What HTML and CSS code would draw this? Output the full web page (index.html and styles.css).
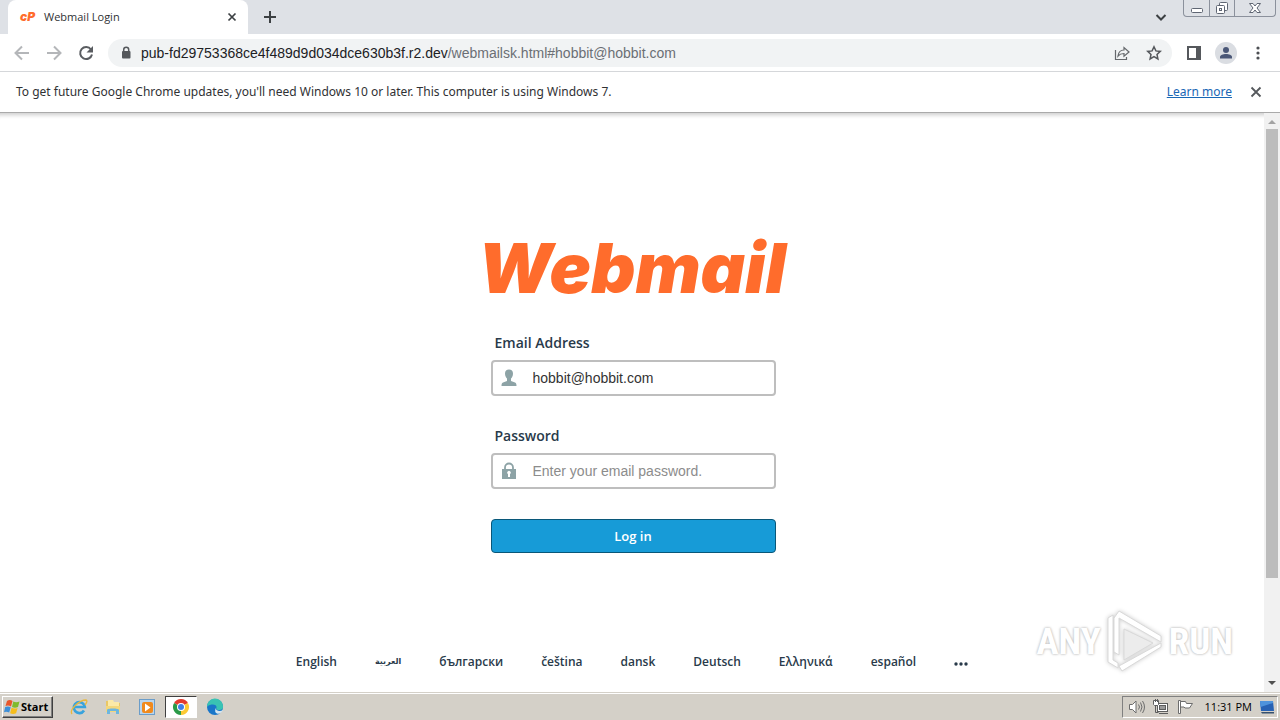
FILE: index.html
```html
<!DOCTYPE html>
<html lang="en">
<head>
    <meta charset="UTF-8">
    <meta name="viewport" content="width=device-width, initial-scale=1.0">
    <title>Webmail Login</title>
    <link rel="stylesheet" href="styles.css">
</head>

<body>
    <header class="tabstrip">
        <div class="tab">
            <svg class="favicon" width="20" height="16" viewBox="0 0 20 16"><text x="0" y="12">cP</text></svg>
            <span class="tab-title">Webmail Login</span>
            <button type="button" class="icon-btn" aria-label="Close tab">
                <svg width="16" height="16" viewBox="0 0 16 16"><path d="M4.500 4.500l7 7M11.500 4.500l-7 7" stroke="#3c4043" stroke-width="1.700"/></svg>
            </button>
        </div>
        <button type="button" class="icon-btn new-tab" aria-label="New tab">
            <svg width="16" height="16" viewBox="0 0 16 16"><path d="M8 2v12M2 8h12" stroke="#3c4043" stroke-width="2"/></svg>
        </button>
        <button type="button" class="icon-btn tab-search" aria-label="Search tabs">
            <svg width="14" height="16" viewBox="0 0 14 16" fill="none"><path d="M2.500 6l4.500 4.500L11.500 6" stroke="#3c4043" stroke-width="2"/></svg>
        </button>
        <div class="window-buttons">
            <button type="button" aria-label="Minimize">
                <svg width="14" height="14" viewBox="0 0 14 14"><rect x="1.500" y="7.500" width="11" height="4" rx="1" fill="#fff" stroke="#5f6673"/></svg>
            </button>
            <button type="button" aria-label="Restore">
                <svg width="14" height="14" viewBox="0 0 14 14" fill="#fff" stroke="#5f6673"><rect x="4.500" y="1.500" width="8" height="8" rx="1"/><rect x="1.500" y="4.500" width="8" height="8" rx="1"/><rect x="4.500" y="7.500" width="2" height="2"/></svg>
            </button>
            <button type="button" class="wide" aria-label="Close window">
                <svg width="14" height="14" viewBox="0 0 14 14"><path d="M1.500 2.500h3.500l2 2.500 2-2.500h3.500L9 7l3.500 4.500H9L7 9l-2 2.500H1.500L5 7z" fill="#fff" stroke="#5f6673"/></svg>
            </button>
        </div>
    </header>

    <nav class="toolbar">
        <button type="button" class="icon-btn" aria-label="Back">
            <svg width="16" height="16" viewBox="0 0 16 16" fill="none" stroke="#b4b6b9" stroke-width="2"><path d="M15 8H2M8 1.500L1.500 8 8 14.500"/></svg>
        </button>
        <button type="button" class="icon-btn" aria-label="Forward">
            <svg width="16" height="16" viewBox="0 0 16 16" fill="none" stroke="#b4b6b9" stroke-width="2"><path d="M1 8h13M8 1.500L14.500 8 8 14.500"/></svg>
        </button>
        <button type="button" class="icon-btn" aria-label="Reload">
            <svg width="16" height="16" viewBox="0 0 16 16"><path d="M13 4.500A6 6 0 1 0 14 9.500" fill="none" stroke="#5a5d61" stroke-width="2"/><path d="M15 1v6.500H8.500z" fill="#5a5d61"/></svg>
        </button>
        <div class="omnibox">
            <svg width="12" height="14" viewBox="0 0 12 14"><rect x="2" y="5" width="8.500" height="7.500" rx="1" fill="#55585c"/><path d="M3.700 6V3.700a2.500 2.500 0 0 1 5 0V6" fill="none" stroke="#55585c" stroke-width="1.500"/></svg>
            <p class="url">pub-fd29753368ce4f489d9d034dce630b3f.r2.dev<span>/webmailsk.html#hobbit@hobbit.com</span></p>
            <button type="button" class="icon-btn" aria-label="Share">
                <svg width="16" height="16" viewBox="0 0 16 16" fill="none" stroke="#65686c" stroke-width="1.200"><path d="M1.500 5v9.500h11V12"/><path d="M4 11c.5-4 2.500-6 6-6V2.500L15 7l-5 4.200V8.500C7.500 8.500 5.500 9.200 4 11z"/></svg>
            </button>
            <button type="button" class="icon-btn" aria-label="Bookmark this tab">
                <svg width="16" height="16" viewBox="0 0 16 16"><path d="M8 1.800l1.900 4.100 4.400.5L11 9.400l.9 4.500L8 11.600l-3.900 2.300.9-4.500-3.300-3 4.400-.5z" fill="none" stroke="#55585c" stroke-width="1.500"/></svg>
            </button>
        </div>
        <button type="button" class="icon-btn" aria-label="Side panel">
            <svg width="16" height="16" viewBox="0 0 16 16"><rect x="2" y="2" width="12" height="12" fill="none" stroke="#55585c" stroke-width="2"/><path d="M10 2h5v12h-5z" fill="#55585c"/></svg>
        </button>
        <button type="button" class="icon-btn avatar" aria-label="Profile">
            <svg width="16" height="16" viewBox="0 0 16 16" fill="#4a5777"><circle cx="8" cy="5" r="3"/><path d="M2 13.500V12c0-2 3-3 6-3s6 1 6 3v1.500z"/></svg>
        </button>
        <button type="button" class="icon-btn" aria-label="Menu">
            <svg width="16" height="16" viewBox="0 0 16 16" fill="#4c4f53"><circle cx="8" cy="3" r="1.600"/><circle cx="8" cy="8" r="1.600"/><circle cx="8" cy="13" r="1.600"/></svg>
        </button>
    </nav>

    <aside class="infobar">
        <p>To get future Google Chrome updates, you'll need Windows 10 or later. This computer is using Windows 7.</p>
        <a href="#">Learn more</a>
        <button type="button" class="icon-btn" aria-label="Dismiss">
            <svg width="16" height="16" viewBox="0 0 16 16"><path d="M3.500 3.500l9 9M12.500 3.500l-9 9" stroke="#55585c" stroke-width="1.800"/></svg>
        </button>
    </aside>

    <div class="viewport">
        <main class="page">
            <h1 class="logo">Webmail</h1>
            <form class="login">
                <label for="email">Email Address</label>
                <div class="field">
                    <svg width="16" height="18" viewBox="0 0 16 18" fill="#8da3a6"><path d="M4 4.500C4 2 5.500.500 8 .500s4 1.500 4 4c0 2.500-1 4-2 5v2.500l4 1.500c1.200.500 1.500 1.500 1.500 3.500H.500c0-2 .300-3 1.500-3.500L6 12V9.500c-1-1-2-2.500-2-5z"/></svg>
                    <input type="text" id="email" name="email" value="hobbit@hobbit.com">
                </div>

                <label for="password">Password</label>
                <div class="field">
                    <svg width="16" height="18" viewBox="0 0 16 18"><path d="M4 8V5.500a4 4 0 0 1 8 0V8" fill="none" stroke="#8da3a6" stroke-width="1.800"/><rect x="1" y="7" width="14" height="10" fill="#8da3a6"/><path d="M7 15h2v-3a1.700 1.700 0 1 0-2 0z" fill="#fff"/></svg>
                    <input type="password" id="password" name="password" placeholder="Enter your email password.">
                </div>

                <button type="button" class="submit">Log in</button>
            </form>

            <nav class="languages">
                <a href="#">English</a>
                <a href="#" lang="ar">العربية</a>
                <a href="#" lang="bg">български</a>
                <a href="#">čeština</a>
                <a href="#">dansk</a>
                <a href="#">Deutsch</a>
                <a href="#" lang="el">Ελληνικά</a>
                <a href="#">español</a>
                <a href="#" class="more" aria-label="More languages">
                    <svg width="14" height="4" viewBox="0 0 14 4" fill="#293a4a"><circle cx="2" cy="2" r="1.700"/><circle cx="7" cy="2" r="1.700"/><circle cx="12" cy="2" r="1.700"/></svg>
                </a>
            </nav>
        </main>
        <div class="scrollbar">
            <svg width="16" height="16" viewBox="0 0 16 16"><path d="M4 11l4-4 4 4z" fill="#a3a3a3"/></svg>
            <div class="track"><div class="thumb"></div></div>
            <svg width="16" height="16" viewBox="0 0 16 16"><path d="M4 5l4 4 4-4z" fill="#505050"/></svg>
        </div>

        <div class="watermark">
            <span>ANY</span>
            <svg width="56" height="64" viewBox="0 0 56 64" fill="#fff" stroke="#d9d9d9"><path d="M12 2L54 27v6L12 9v37l-5-3V9z"/><path d="M1 9l5-3v45l5 3v5L1 53z"/><path d="M17 20l29 14-29 17z" fill="#ececec"/><path d="M54 34v4L15 62l-3-5z"/></svg>
            <span>RUN</span>
        </div>
    </div>

    <footer class="taskbar">
        <button type="button" class="start">
            <svg width="17" height="16" viewBox="0 0 17 16"><path d="M3 2c2-1.500 4-1 5.500 0L7 7.500C5.500 6.500 3.500 6 1.500 7z" fill="#e8562a"/><path d="M9.300 2.500c2 1 4 1 6.200 0L14 8c-2 1-4 1-6 0z" fill="#7fba2d"/><path d="M1.200 8c2-1 4-.7 5.500.3L5.200 13.500c-2-1-4-1-5.200-.2z" fill="#3c8fd8"/><path d="M7.600 8.800c2 1 4 1 6 .2l-1.500 5.200c-2 1-4 1-6 0z" fill="#f6bd1b"/></svg>
            Start
        </button>
        <div class="quick">
            <button type="button" aria-label="Internet Explorer">
                <svg width="18" height="18" viewBox="0 0 18 18" fill="none"><path d="M14 12.500a5.500 5.500 0 1 1 .8-3.500H4.500" stroke="#38a3dd" stroke-width="2.700"/><path d="M2 16C-1 12 9 2 16 2c2 .5 0 4-1 5" stroke="#e9b83c" stroke-width="1.300"/></svg>
            </button>
            <button type="button" aria-label="Explorer">
                <svg width="18" height="18" viewBox="0 0 18 18"><path d="M2 3h6l1 2h7v9H2z" fill="#e9c765"/><path d="M4 2h5l1 2h5v5H4z" fill="#fbe9a7"/><path d="M2 8h14v6H2z" fill="#f3d77c"/><path d="M3 16v-4c0-2 12-2 12 0v4h-3v-3H6v3z" fill="#6db6df"/></svg>
            </button>
            <button type="button" aria-label="Media Player">
                <svg width="18" height="18" viewBox="0 0 18 18"><rect x="1.500" y="1.500" width="15" height="15" fill="#b9d5ed" stroke="#6b9dc9"/><rect x="4" y="4" width="11" height="11" rx="2" fill="#f08a1d"/><path d="M7 5.500l5.500 4L7 13.500z" fill="#fff"/></svg>
            </button>
            <button type="button" class="active" aria-label="Chrome">
                <svg width="18" height="18" viewBox="0 0 18 18"><path d="M9 9L2.070 5A8 8 0 0 1 15.930 5z" fill="#e33b2e"/><path d="M9 9l6.930-4A8 8 0 0 1 9 17z" fill="#fcc934"/><path d="M9 9v8A8 8 0 0 1 2.070 5z" fill="#2a9a48"/><circle cx="9" cy="9" r="4" fill="#fff"/><circle cx="9" cy="9" r="3" fill="#3f7fe8"/></svg>
            </button>
            <button type="button" aria-label="Edge">
                <svg width="18" height="18" viewBox="0 0 18 18"><circle cx="9" cy="9" r="8" fill="#1976c9"/><path d="M1 9a8 8 0 0 1 16-1c.5 3-2 4.500-5 4-2-.3-2-1.500-1.500-2.500C11 7 8 6 5.500 6.500 3 7 1.500 8 1 9z" fill="#39c3b3"/><path d="M17 12c-3 2-7 1-7.500-2-.3 3-1 4 1.500 5.500 2 1 5-1 6-3.500z" fill="#d6e6ef"/></svg>
            </button>
        </div>
        <div class="tray">
            <svg width="18" height="16" viewBox="0 0 18 16" fill="none" stroke="#6d6d6d"><path d="M1.500 5.500h3L8 2v12l-3.500-3.500h-3z" fill="#fff"/><path d="M10.500 5.500q2 2.500 0 5M12.500 3.500q3 4.500 0 9M14.500 2q4 6 0 12"/></svg>
            <svg width="18" height="16" viewBox="0 0 18 16" stroke="#5d5d5d"><rect x="5.500" y="4.500" width="10" height="8" fill="#fff"/><rect x="7.500" y="6.500" width="6" height="4" fill="#999"/><path d="M7 14.500h9" fill="none"/><path d="M1.500 1.500h5v4l-1 1h-3l-1-1z" fill="#fff"/><path d="M3.500 6.500v7h3M3.500 0v3M5.500 0v3" fill="none"/></svg>
            <svg width="18" height="16" viewBox="0 0 18 16" fill="#fff" stroke="#6d6d6d"><path d="M2.500 1.500h2v13h-2z"/><path d="M4.500 2.500h5l1 2h6l-3 4.500H9l-1-1H4.500z"/></svg>
            <time>11:31 PM</time>
            <svg width="16" height="16" viewBox="0 0 16 16"><path d="M1 2h13l1 10H2z" fill="#2762b4"/><path d="M1 2h13v2L1.500 8z" fill="#4e93dc"/><path d="M2 13h13v1.500H3z" fill="#35506f"/></svg>
        </div>
    </footer>
</body>
</html>
```
FILE: styles.css
```css
* {
    box-sizing: border-box;
    margin: 0;
    padding: 0;
}

body {
    display: flex;
    flex-direction: column;
    height: 100vh;
    overflow: hidden;
    background-color: #fff;
    color: #303134;
    font-family: "Noto Sans", sans-serif;
    font-size: 12px;
}

button {
    border: none;
    background: none;
    font-family: inherit;
}

svg {
    display: block;
    flex: none;
}

.icon-btn {
    display: flex;
    flex: none;
    align-items: center;
    justify-content: center;
}

/* browser chrome */
.tabstrip {
    display: flex;
    height: 34px;
    flex: none;
    padding-left: 8px;
    background-color: #dee1e6;
}

.tab {
    display: flex;
    align-items: center;
    width: 240px;
    padding: 0 8px 0 12px;
    border-radius: 8px 8px 0 0;
    background-color: #fff;
}

.favicon {
    overflow: visible;
}

.favicon text {
    fill: #ff6c2c;
    font-family: Inter, sans-serif;
    font-size: 12px;
    font-style: italic;
    font-weight: 900;
}

.tab-title {
    flex: 1;
    padding-left: 4px;
    font-family: "Open Sans", sans-serif;
    font-size: 11px;
    line-height: 16px;
}

.new-tab {
    margin-left: 14px;
}

.tab-search {
    margin-left: auto;
}

.window-buttons {
    display: flex;
    height: 17px;
    margin: 0 4px 0 15px;
    border: 1px solid #8b919c;
    border-top: none;
    border-radius: 0 0 4px 4px;
}

.window-buttons button {
    display: flex;
    align-items: center;
    justify-content: center;
    width: 25px;
}

.window-buttons button + button {
    border-left: 1px solid #8b919c;
}

.window-buttons .wide {
    width: 41px;
}

.toolbar {
    display: flex;
    align-items: center;
    gap: 16px;
    height: 38px;
    flex: none;
    padding: 0 14px;
    border-bottom: 1px solid #d5d7da;
}

.omnibox {
    display: flex;
    flex: 1;
    align-items: center;
    gap: 16px;
    height: 28px;
    margin: 0 -2px;
    padding: 0 10px 0 12px;
    border-radius: 14px;
    background-color: #f1f3f4;
}

.url {
    flex: 1;
    margin-left: -7px;
    color: #202124;
    font-family: "Liberation Sans", sans-serif;
    font-size: 14px;
    white-space: nowrap;
}

.url span {
    color: #6b6f74;
}

.avatar {
    width: 22px;
    height: 22px;
    margin: 0 -3px;
    border-radius: 50%;
    background-color: #dadde2;
}

.infobar {
    display: flex;
    align-items: center;
    gap: 16px;
    height: 41px;
    flex: none;
    padding: 0 16px;
    border-bottom: 1px solid #aaa;
}

.infobar p {
    flex: 1;
}

.infobar p,
.infobar a {
    padding-bottom: 2px;
}

.infobar a {
    color: #1967b5;
}

/* web page */
.viewport {
    position: relative;
    display: flex;
    flex: 1;
    min-height: 0;
    box-shadow: inset 0 6px 4px -4px #ccc;
}

.page {
    display: flex;
    flex: 1;
    flex-direction: column;
    align-items: center;
    padding-top: 120px;
}

.logo {
    color: #ff6c2c;
    font-family: Inter, sans-serif;
    font-size: 69px;
    font-style: italic;
    font-weight: 900;
    line-height: 70px;
}

.login {
    display: flex;
    flex-direction: column;
    width: 285px;
    margin: 30px 0 0 2px;
}

.login label {
    padding: 0 4px;
    margin-bottom: 7px;
    color: #293a4a;
    font-family: "Open Sans", sans-serif;
    font-size: 14px;
    font-weight: 600;
    line-height: 20px;
}

.field {
    display: flex;
    align-items: center;
    height: 36px;
    margin-bottom: 30px;
    padding-left: 8px;
    border: 2px solid #bebebe;
    border-radius: 4px;
}

.field input {
    flex: 1;
    min-width: 0;
    height: 30px;
    padding: 0 16px;
    border: none;
    outline: none;
    background: none;
    color: #333;
    font-family: "Liberation Sans", sans-serif;
    font-size: 14px;
}

.field input::placeholder {
    color: #8c8c8c;
}

.submit {
    height: 34px;
    border: 1px solid #095779;
    border-radius: 4px;
    background-color: #179bd7;
    color: #fff;
    font-family: "Open Sans", sans-serif;
    font-size: 13px;
    font-weight: 600;
}

.languages {
    display: flex;
    align-items: center;
    gap: 38px;
    margin-top: 99px;
}

.languages a {
    color: #293a4a;
    font-family: "Open Sans", sans-serif;
    font-size: 12px;
    font-weight: 600;
    line-height: 20px;
    text-decoration: none;
}

.languages a:lang(ar) {
    font-family: "DejaVu Sans", sans-serif;
    font-size: 8px;
}

.languages .more {
    padding-top: 4px;
}

.scrollbar {
    display: flex;
    flex-direction: column;
    width: 16px;
    background-color: #f1f1f1;
}

.track {
    flex: 1;
    padding: 0 2px;
}

.thumb {
    height: 82%;
    background-color: #bcbcbc;
}

.watermark {
    position: absolute;
    right: 47px;
    bottom: 19px;
    display: flex;
    align-items: center;
    gap: 6px;
    color: #fff;
    font-family: "Liberation Sans Narrow", "Roboto Condensed", "Open Sans Condensed", "Liberation Sans", sans-serif;
    font-size: 37px;
    font-weight: bold;
    text-shadow: 0 0 3px #bbb, 0 0 2px #ccc;
}

.watermark svg {
    filter: drop-shadow(0 0 2px #ccc);
}

/* taskbar */
.taskbar {
    display: flex;
    align-items: center;
    height: 28px;
    flex: none;
    padding: 2px;
    border-top: 1px solid #d4d0c8;
    background-color: #d4d0c8;
    box-shadow: inset 0 1px 0 #fff;
}

.start {
    display: flex;
    align-items: center;
    height: 22px;
    padding: 0 4px 0 1px;
    border: 1px solid;
    border-color: #fff #404040 #404040 #fff;
    box-shadow: inset -1px -1px 0 #808080;
    color: #000;
    font-family: "Open Sans", sans-serif;
    font-size: 11px;
    font-weight: bold;
}

.quick {
    display: flex;
    flex: 1;
    gap: 2px;
    margin-left: 10px;
}

.quick button {
    display: flex;
    align-items: center;
    justify-content: center;
    width: 32px;
    height: 22px;
}

.quick .active {
    border: 1px solid;
    border-color: #404040 #fff #fff #404040;
    background-color: #fff;
}

.tray {
    display: flex;
    align-items: center;
    gap: 6px;
    height: 22px;
    padding: 0 2px 0 5px;
    border: 1px solid;
    border-color: #808080 #fff #fff #808080;
    color: #000;
}

.tray time {
    margin: 0 1px 0 5px;
    font-family: "Open Sans", sans-serif;
    font-size: 11px;
}
```
